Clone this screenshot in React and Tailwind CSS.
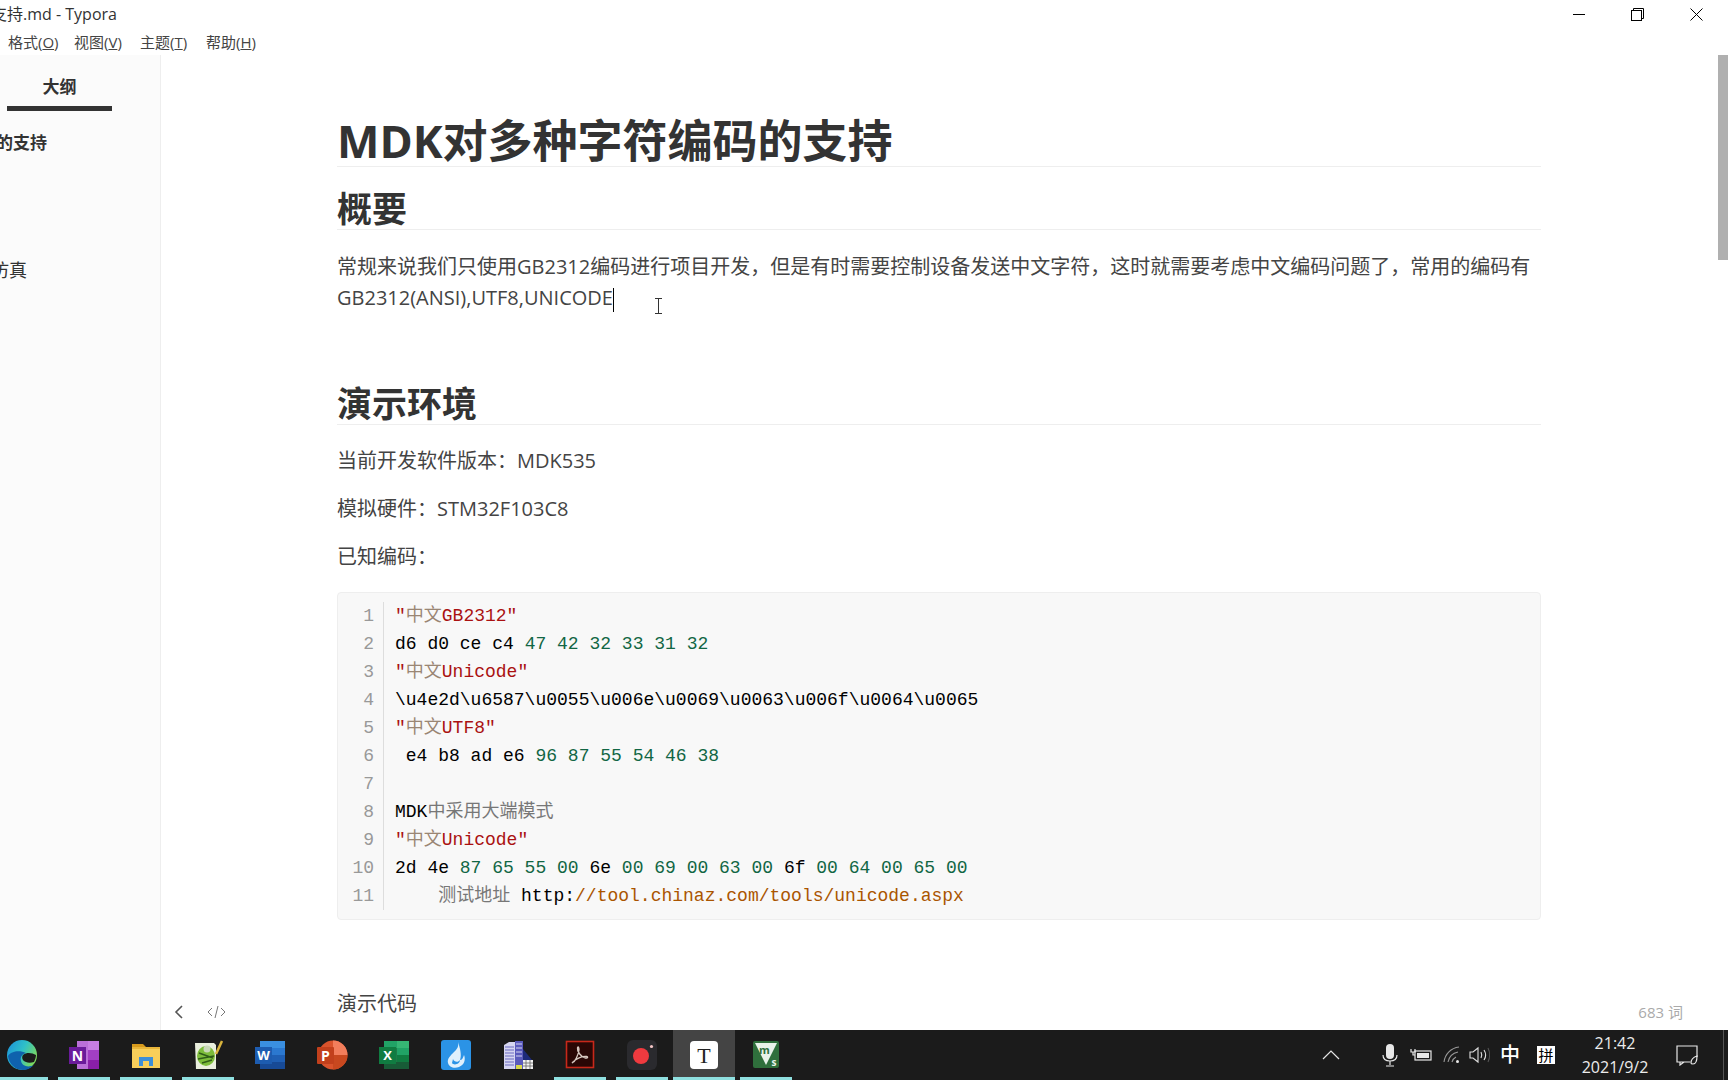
import React from "react";

const menus = [
  ["格式(", "O", ")"],
  ["视图(", "V", ")"],
  ["主题(", "T", ")"],
  ["帮助(", "H", ")"],
];

const s = "text-[#a11]";
const z = "text-[#9a8674]";
const n = "text-[#116644]";
const g = "text-[#777]";
const k = "text-black";
const c = "text-[#aa5500]";

const codeLines = [
  [[s, '"'], [z, "中文"], [s, 'GB2312"']],
  [[k, "d6 d0 ce c4 "], [n, "47 42 32 33 31 32"]],
  [[s, '"'], [z, "中文"], [s, 'Unicode"']],
  [[k, "\\u4e2d\\u6587\\u0055\\u006e\\u0069\\u0063\\u006f\\u0064\\u0065"]],
  [[s, '"'], [z, "中文"], [s, 'UTF8"']],
  [[k, " e4 b8 ad e6 "], [n, "96 87 55 54 46 38"]],
  [],
  [[k, "MDK"], [g, "中采用大端模式"]],
  [[s, '"'], [z, "中文"], [s, 'Unicode"']],
  [[k, "2d "], [k, "4e "], [n, "87 65 55 00 "], [k, "6e "], [n, "00 69 00 63 00 "], [k, "6f "], [n, "00 64 00 65 00"]],
  [[k, "    "], [g, "测试地址 "], [k, "http:"], [c, "//tool.chinaz.com/tools/unicode.aspx"]],
];

function EdgeIcon() {
  return (
    <svg width="32" height="32" viewBox="0 0 32 32">
      <defs>
        <linearGradient id="edge1" x1="0" y1="0" x2="1" y2="0.5">
          <stop offset="0" stopColor="#1a8fdc" />
          <stop offset="0.55" stopColor="#2fc0c8" />
          <stop offset="1" stopColor="#7bd85f" />
        </linearGradient>
      </defs>
      <circle cx="16" cy="16" r="15" fill="url(#edge1)" />
      <path d="M2 17c1 8 7 14 15 14 4 0 8-2 11-5-6 3-12 1-13-4-1-4 1-7 5-8-6-3-15-2-18 3z" fill="#0f62ad" />
      <path d="M17 16c4-3 9-2 13 0 0 2-1 5-2 7-3 1-6 1-8 0-3-1-5-4-3-7z" fill="#1b1b1b" />
    </svg>
  );
}

function OneNoteIcon() {
  return (
    <svg width="32" height="32" viewBox="0 0 32 32">
      <rect x="9" y="2" width="22" height="28" fill="#ba6fd8" />
      <rect x="20" y="2" width="11" height="9" fill="#c77ee2" />
      <rect x="20" y="11" width="11" height="10" fill="#a23fc4" />
      <rect x="20" y="21" width="11" height="9" fill="#8a1fa8" />
      <rect x="1" y="8" width="17" height="17" fill="#6a1b9a" />
      <text x="9.5" y="21.5" textAnchor="middle" fontSize="14" fontWeight="700" fill="#fff" fontFamily="Open Sans, sans-serif">N</text>
    </svg>
  );
}

function FolderIcon() {
  return (
    <svg width="32" height="32" viewBox="0 0 32 32">
      <path d="M2 5h11l3 3h-14z" fill="#d79a1c" />
      <rect x="2" y="8" width="28" height="21" fill="#f8cf5a" />
      <rect x="2" y="8" width="28" height="2" fill="#eab63a" />
      <path d="M9 27v-9h14v9h-4v-5h-6v5z" fill="#3d8fd8" />
    </svg>
  );
}

function NotepadIcon() {
  return (
    <svg width="32" height="32" viewBox="0 0 32 32">
      <path d="M3 4h19l2 2v24H4z" fill="#e9eedd" />
      <ellipse cx="14" cy="17" rx="9" ry="10" fill="#7cbc3a" />
      <path d="M6 20l16-3M7 14l14 5M10 24l10-3" stroke="#2f5c17" strokeWidth="1.4" />
      <circle cx="15" cy="10" r="3.5" fill="#c9d8b8" />
      <path d="M24 15L30 2" stroke="#d8b33c" strokeWidth="2.5" />
    </svg>
  );
}

function WordIcon() {
  return (
    <svg width="32" height="32" viewBox="0 0 32 32">
      <rect x="6" y="2" width="25" height="7" fill="#3a8fe0" />
      <rect x="6" y="9" width="25" height="7" fill="#2b78d0" />
      <rect x="6" y="16" width="25" height="7" fill="#1f5fb4" />
      <rect x="6" y="23" width="25" height="7" fill="#174a96" />
      <rect x="1" y="8" width="17" height="17" fill="#1d5cb0" />
      <text x="9.5" y="21" textAnchor="middle" fontSize="13" fontWeight="700" fill="#fff" fontFamily="Open Sans, sans-serif">W</text>
    </svg>
  );
}

function PowerPointIcon() {
  return (
    <svg width="32" height="32" viewBox="0 0 32 32">
      <circle cx="17" cy="16" r="14.5" fill="#d9532c" />
      <path d="M17 1.5A14.5 14.5 0 0 1 31.5 16H17z" fill="#f27e5c" />
      <path d="M17 16h14.5A14.5 14.5 0 0 1 17 30.500z" fill="#c8481f" />
      <rect x="1" y="8" width="17" height="17" rx="1" fill="#c2401c" />
      <text x="9.5" y="21.500" textAnchor="middle" fontSize="14" fontWeight="700" fill="#fff" fontFamily="Open Sans, sans-serif">P</text>
    </svg>
  );
}

function ExcelIcon() {
  return (
    <svg width="32" height="32" viewBox="0 0 32 32">
      <rect x="6" y="2" width="25" height="28" fill="#1e7b48" />
      <rect x="19" y="2" width="12" height="7" fill="#36b574" />
      <rect x="6" y="2" width="13" height="7" fill="#21a366" />
      <rect x="19" y="9" width="12" height="7" fill="#21a366" />
      <rect x="19" y="16" width="12" height="7" fill="#107c41" />
      <rect x="6" y="23" width="25" height="7" fill="#185c37" />
      <rect x="1" y="8" width="17" height="17" fill="#107c41" />
      <text x="9.500" y="21" textAnchor="middle" fontSize="13" fontWeight="700" fill="#fff" fontFamily="Open Sans, sans-serif">X</text>
    </svg>
  );
}

function FireIcon() {
  return (
    <svg width="32" height="32" viewBox="0 0 32 32">
      <rect x="1" y="1" width="30" height="30" rx="3" fill="#2b93e6" />
      <path d="M18 3c1 5-1 7-4 10-4 4-7 7-6 11 1 4 6 6 11 4 5-2 7-7 5-12-1 3-2 5-4 5 2-5 0-12-2-18z" fill="#dff0fc" />
      <path d="M13 20c1 3 5 4 7 1 0 4-6 6-8 3z" fill="#2b93e6" />
    </svg>
  );
}

function BuildingIcon() {
  return (
    <svg width="32" height="32" viewBox="0 0 32 32">
      <path d="M2 6l5-3h6v27H2z" fill="#d6d6f2" />
      <path d="M3 8h9M3 11h9M3 14h9M3 17h9M3 20h9M3 23h9M3 26h9" stroke="#6a6ac0" strokeWidth="1.2" />
      <rect x="13" y="2" width="8" height="28" fill="#5a5abc" />
      <path d="M14 5h6M14 9h6M14 13h6M14 17h6" stroke="#d4d4f0" strokeWidth="1.1" />
      <path d="M21 10l9 11v9h-9z" fill="#1d2a7a" />
      <rect x="21" y="21" width="10" height="9" fill="#f2f2f2" />
      <path d="M21 24h10M21 27h10M24 21v9M28 21v9" stroke="#666" strokeWidth="0.8" />
      <rect x="14" y="26" width="6" height="4" fill="#d8d84a" />
    </svg>
  );
}

function PdfIcon() {
  return (
    <svg width="32" height="32" viewBox="0 0 32 32">
      <rect x="2.500" y="2.500" width="27" height="26" fill="#2a0705" stroke="#c8281a" strokeWidth="1.600" />
      <path d="M8 24c3-1 6-7 7-13 0-3-1-4-1.500-2-.5 3 3 9 8 10 2 .5 3-1 1-1.500-4-.5-11 2-14 6z" fill="none" stroke="#d8c8c0" strokeWidth="1.300" />
    </svg>
  );
}

function RecordIcon() {
  return (
    <svg width="32" height="32" viewBox="0 0 32 32">
      <rect x="1" y="1" width="30" height="30" rx="6" fill="#2a2a2e" />
      <circle cx="15" cy="17" r="8" fill="#f03a3f" />
      <circle cx="25.500" cy="7.500" r="1.600" fill="#f3c6c6" />
    </svg>
  );
}

function TyporaIcon() {
  return (
    <svg width="30" height="30" viewBox="0 0 30 30">
      <rect x="1" y="1" width="28" height="28" rx="4" fill="#fff" />
      <text x="15" y="23" textAnchor="middle" fontSize="22" fontWeight="400" fill="#222" fontFamily="Liberation Serif, serif">T</text>
    </svg>
  );
}

function VimIcon() {
  return (
    <svg width="32" height="32" viewBox="0 0 32 32">
      <rect x="3" y="2" width="26" height="27" rx="2" fill="#2f6f3c" />
      <path d="M5 4h22L16 26z" fill="#e8f2ea" />
      <text x="14.500" y="15" textAnchor="middle" fontSize="11" fontWeight="700" fill="#2f6f3c" fontFamily="Open Sans, sans-serif">m</text>
      <text x="24" y="27" textAnchor="middle" fontSize="10" fontWeight="700" fill="#e8f2ea" fontFamily="Open Sans, sans-serif">s</text>
    </svg>
  );
}

const taskItems = [
  { icon: <EdgeIcon />, open: true },
  { icon: <OneNoteIcon />, open: true },
  { icon: <FolderIcon />, open: true },
  { icon: <NotepadIcon />, open: true },
  { icon: <WordIcon /> },
  { icon: <PowerPointIcon /> },
  { icon: <ExcelIcon /> },
  { icon: <FireIcon /> },
  { icon: <BuildingIcon /> },
  { icon: <PdfIcon />, open: true },
  { icon: <RecordIcon />, open: true },
  { icon: <TyporaIcon />, open: true, active: true },
  { icon: <VimIcon />, open: true },
];

function Tray() {
  return (
    <div className="ml-auto flex h-full items-center text-white">
      <div className="flex w-[40px] justify-center">
        <svg width="18" height="10" viewBox="0 0 18 10" fill="none" stroke="#e6e6e6" strokeWidth="1.200">
          <path d="M1 9l8-8 8 8" />
        </svg>
      </div>
      <div className="ml-[24px] flex w-[30px] justify-center">
        <svg width="16" height="24" viewBox="0 0 16 24" fill="none">
          <rect x="4" y="1" width="8" height="15" rx="4" fill="#e8e8e8" />
          <path d="M1 12c0 4 3 6 7 6s7-2 7-6M8 18v4M4 23h8" stroke="#e8e8e8" strokeWidth="1.200" />
        </svg>
      </div>
      <div className="flex w-[32px] justify-center">
        <svg width="22" height="14" viewBox="0 0 22 14" fill="none" stroke="#e8e8e8" strokeWidth="1.200">
          <rect x="5" y="3" width="16" height="9" />
          <rect x="7" y="5" width="12" height="5" fill="#e8e8e8" stroke="none" />
          <path d="M1 1v3h4V1M3 4v3h2" />
        </svg>
      </div>
      <div className="flex w-[30px] justify-center">
        <svg width="18" height="18" viewBox="0 0 18 18" fill="none" stroke="#9a9a9a" strokeWidth="1.100">
          <path d="M1 16C2 8 8 2 16 1M5 16c1-5 5-9 10-10M9 16c.5-2 2-4 4-5" />
          <circle cx="14.500" cy="15.500" r="1.500" fill="#e8e8e8" stroke="none" />
        </svg>
      </div>
      <div className="flex w-[26px] justify-center">
        <svg width="22" height="18" viewBox="0 0 22 18" fill="none" stroke="#e0e0e0" strokeWidth="1.100">
          <path d="M1 6h3l5-4v14l-5-4H1z" />
          <path d="M12 6c1 2 1 4 0 6M15 4c2 3 2 7 0 10" />
          <path d="M19 2c2 4 2 10 0 14" stroke="#555" />
        </svg>
      </div>
      <div className="flex w-[34px] justify-center text-[20px] font-medium">中</div>
      <div className="flex w-[38px] justify-center">
        <div className="flex h-[18px] w-[18px] items-center justify-center bg-white text-[15px] leading-none text-black">拼</div>
      </div>
      <div className="flex w-[100px] flex-col items-center text-[16px] leading-[24px] text-[#ececec]">
        <span>21:42</span>
        <span>2021/9/2</span>
      </div>
      <div className="flex w-[44px] justify-center">
        <svg width="22" height="21" viewBox="0 0 22 21" fill="none" stroke="#e8e8e8" strokeWidth="1.200">
          <path d="M14 17H1V1h20v11M4 17v3l4-3" />
          <path d="M15 18c0-4 3-6 6-7 0 4-1 8-4 8-1 0-2-.5-2-1z" />
        </svg>
      </div>
      <div className="flex h-full w-[19px] justify-end pr-[4px]">
        <div className="h-full w-px bg-[#555]" />
      </div>
    </div>
  );
}

export default function App() {
  return (
    <div className="flex h-screen w-full flex-col overflow-hidden bg-white font-['Open_Sans','Noto_Sans_CJK_SC',sans-serif] text-[#333]">
      <div className="flex h-[28px] shrink-0 items-center justify-between">
        <div className="ml-[-9px] text-[16px] text-[#333]">支持.md - Typora</div>
        <div className="flex pr-[2px]">
          <div className="flex h-[28px] w-[58px] items-center justify-center">
            <div className="h-px w-[12px] bg-black" />
          </div>
          <div className="flex h-[28px] w-[58px] items-center justify-center">
            <svg width="13" height="13" viewBox="0 0 13 13" fill="none" stroke="#000" strokeWidth="1">
              <rect x="0.500" y="2.500" width="10" height="10" />
              <path d="M2.500 2.500v-2h10v10h-2" />
            </svg>
          </div>
          <div className="flex h-[28px] w-[60px] items-center justify-center">
            <svg width="13" height="13" viewBox="0 0 13 13" fill="none" stroke="#000" strokeWidth="1">
              <path d="M0.500 0.500l12 12M12.500 0.500l-12 12" />
            </svg>
          </div>
        </div>
      </div>
      <div className="flex h-[27px] shrink-0 items-center pl-[8px] pt-[2px] text-[15px] text-[#444]">
        {menus.map((m) => (
          <span key={m[1]} className="w-[66px]">
            {m[0]}
            <span className="underline">{m[1]}</span>
            {m[2]}
          </span>
        ))}
      </div>

      <div className="relative flex min-h-0 flex-1">
        <aside className="flex w-[161px] shrink-0 flex-col overflow-hidden border-r border-[#eeeeee] bg-[#fbfbfb]">
          <div className="ml-[7px] mt-[18px] flex h-[38px] w-[105px] justify-center border-b-[5px] border-[#333] text-[17px] font-bold leading-[28px]">
            大纲
          </div>
          <div className="ml-[-4px] mt-[20px] text-[17px] font-bold leading-[24px]">的支持</div>
          <div className="ml-[-9px] mt-[103px] text-[18px] leading-[24px]">仿真</div>
        </aside>

        <main className="min-w-0 flex-1 overflow-hidden pl-[176px] pr-[187px] pt-[60px]">
          <h1 className="border-b border-[#eeeeee] text-[45px] font-bold leading-[51px]">MDK对多种字符编码的支持</h1>
          <h2 className="mt-[21px] border-b border-[#eeeeee] text-[35px] font-bold leading-[41px]">概要</h2>
          <p className="mt-[21px] whitespace-nowrap text-[20px] leading-[31px] text-[#444]">
            常规来说我们只使用GB2312编码进行项目开发，但是有时需要控制设备发送中文字符，这时就需要考虑中文编码问题了，常用的编码有
            <br />
            GB2312(ANSI),UTF8,UNICODE
            <span className="inline-block h-[24px] w-px bg-black align-middle" />
          </p>
          <h2 className="mt-[70px] border-b border-[#eeeeee] text-[35px] font-bold leading-[41px]">演示环境</h2>
          <p className="mt-[20px] text-[20px] leading-[32px] text-[#444]">当前开发软件版本：MDK535</p>
          <p className="mt-[16px] text-[20px] leading-[32px] text-[#444]">模拟硬件：STM32F103C8</p>
          <p className="mt-[16px] text-[20px] leading-[32px] text-[#444]">已知编码：</p>

          <div className="mt-[19px] flex rounded-[4px] border border-[#eeeeee] bg-[#f8f8f8] pb-[9px] pt-[9px] font-['Liberation_Mono','Noto_Sans_CJK_SC',monospace] text-[18px] leading-[28px]">
            <div className="flex w-[46px] shrink-0 flex-col items-end border-r border-[#dddddd] pr-[9px] text-[#999]">
              {codeLines.map((_, i) => (
                <div key={i} className="h-[28px]">{i + 1}</div>
              ))}
            </div>
            <div className="flex flex-col pl-[11px]">
              {codeLines.map((line, i) => (
                <div key={i} className="h-[28px] whitespace-pre">
                  {line.map((part, j) => (
                    <span key={j} className={part[0]}>{part[1]}</span>
                  ))}
                </div>
              ))}
            </div>
          </div>

          <p className="mt-[68px] text-[20px] leading-[32px] text-[#444]">演示代码</p>
        </main>

        {/* things floating over the editor */}
        <svg className="absolute left-[652px] top-[243px]" width="13" height="16" viewBox="0 0 13 16" fill="none" stroke="#333" strokeWidth="1">
          <path d="M3 0.500h7M6.500 0.500v15M3 15.500h7" />
        </svg>
        <div className="absolute right-0 top-0 h-[205px] w-[10px] bg-[#b0b0b0]" />
        <div className="absolute bottom-[11px] left-[174px] flex items-center gap-[23px] text-[#666]">
          <svg width="10" height="14" viewBox="0 0 10 14" fill="none" stroke="#555" strokeWidth="1.600">
            <path d="M8 1L2 7l6 6" />
          </svg>
          <svg width="19" height="14" viewBox="0 0 19 14" fill="none" stroke="#777" strokeWidth="1">
            <path d="M5 3L1 7l4 4M14 3l4 4-4 4M11 1l-3 12" />
          </svg>
        </div>
        <div className="absolute bottom-[7px] right-[45px] text-[15px] text-[#aaa]">683 词</div>
      </div>

      <footer className="flex h-[50px] shrink-0 bg-[#1b1b1b]">
        <div className="ml-[-9px] flex h-full">
          {taskItems.map((item, i) => (
            <div key={i} className={item.active ? "flex h-full w-[62px] flex-col bg-[#444]" : "flex h-full w-[62px] flex-col"}>
              <div className="flex flex-1 items-center justify-center pt-[3px]">{item.icon}</div>
              {item.open ? (
                <div className={item.active ? "h-[3px] bg-[#8fe0e0]" : "mx-[5px] h-[3px] bg-[#8fe0e0]"} />
              ) : (
                <div className="h-[3px]" />
              )}
            </div>
          ))}
        </div>
        <Tray />
      </footer>
    </div>
  );
}
